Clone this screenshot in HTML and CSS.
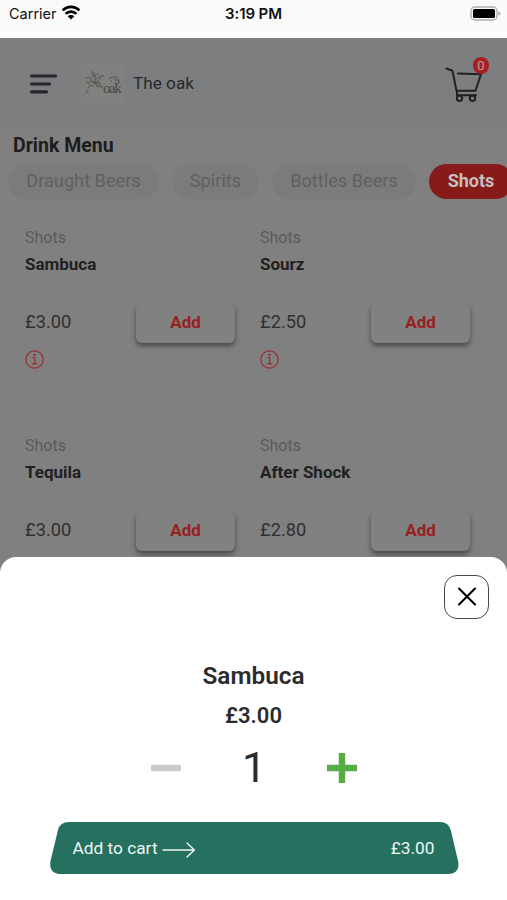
FILE: index.html
```html
<!DOCTYPE html>
<html lang="en">
<head>
<meta charset="utf-8">
<title>The oak - Drink Menu</title>
<link rel="stylesheet" href="styles.css">
</head>
<body>
<div class="screen">
  <div class="status">
    <div class="carrier"><span>Carrier</span>
      <svg width="20" height="15" viewBox="0 0 20 15" fill="none" stroke="#000" stroke-width="2.7"><path d="M1.6 5.4a12 12 0 0 1 16.8 0M4.6 8.9a7.7 7.7 0 0 1 10.8 0"/><path d="M10 14.4 6.7 11.3a4.7 4.7 0 0 1 6.6 0z" fill="#000" stroke="none"/></svg>
    </div>
    <div class="time">3:19 PM</div>
    <svg class="battery" width="31" height="15" viewBox="0 0 31 15"><rect x="1" y="1" width="26" height="13" rx="4" fill="#fafafa" stroke="#b1b1b1" stroke-width="1.4"/><rect x="3" y="3" width="22" height="9" rx="1.5"/><path d="M28.3 5.2q2.2.8 2.2 2.3t-2.2 2.3z" fill="#b1b1b1"/></svg>
  </div>
  <header class="header">
    <svg class="menu-icon" width="28" height="22" viewBox="0 0 28 22" stroke="#25252f" stroke-width="3.2" stroke-linecap="round"><path d="M2.5 3h24M2.5 11h18M2.5 18.8h15"/></svg>
    <div class="logo">
      <svg width="40" height="30" viewBox="0 0 40 30" fill="none" stroke="#56524f" stroke-width=".9"><path d="M2 11q4-4 6 1t6 2M4 15q5-4 9 1t7 2M9 4q4 2 3 7t5 5M8 9l8-3M11 12l9-5M5 21q0 5-3 3M5 20q3-5 6-1M10 7 9 3M14 14l7-7M3 13l4 4M7 11l8 8M12 14q5-2 6 5"/><path d="M29 14q-4-3-2-4t5-1 4 4-4 2M31 12q4-1 5 3"/></svg>
      <span>oak</span>
    </div>
    <span class="venue">The oak</span>
    <div class="cart">
      <svg width="40" height="39" viewBox="0 0 40 39" fill="none" stroke="#202123" stroke-width="2" stroke-linecap="round" stroke-linejoin="round"><path d="m1.5 3.5 6 2.2 4 20h19l5.5-16.5L13 8.5M12 25.7v4.5h19"/><circle cx="14.5" cy="33.3" r="2.7"/><circle cx="27.5" cy="33.3" r="2.7"/></svg>
      <span class="badge">0</span>
    </div>
  </header>
  <main class="content">
    <h1>Drink Menu</h1>
    <nav class="tabs">
      <span class="tab draught">Draught Beers</span><span class="tab spirits">Spirits</span><span class="tab bottles">Bottles Beers</span><span class="tab active">Shots</span>
    </nav>
    <section class="grid">
      <article class="item"><div class="category">Shots</div><h2>Sambuca</h2><div class="buy"><span class="cost">£3.00</span><span class="add">Add</span></div><svg class="info" width="20" height="20" viewBox="0 0 20 20" fill="none" stroke="#9a2a2e" stroke-width="1.2"><circle cx="9.5" cy="9.5" r="8.7"/><path d="M7.3 7.5h2.5v6.2M7.1 13.8h5"/><circle cx="9.5" cy="4.9" r=".6" fill="#9a2a2e"/></svg></article>
      <article class="item"><div class="category">Shots</div><h2>Sourz</h2><div class="buy"><span class="cost">£2.50</span><span class="add">Add</span></div><svg class="info" width="20" height="20" viewBox="0 0 20 20" fill="none" stroke="#9a2a2e" stroke-width="1.2"><circle cx="9.5" cy="9.5" r="8.7"/><path d="M7.3 7.5h2.5v6.2M7.1 13.8h5"/><circle cx="9.5" cy="4.9" r=".6" fill="#9a2a2e"/></svg></article>
      <article class="item"><div class="category">Shots</div><h2>Tequila</h2><div class="buy"><span class="cost">£3.00</span><span class="add">Add</span></div></article>
      <article class="item"><div class="category">Shots</div><h2>After Shock</h2><div class="buy"><span class="cost">£2.80</span><span class="add">Add</span></div></article>
    </section>
  </main>
  <section class="sheet">
    <div class="close"><svg width="20" height="20" viewBox="0 0 20 20" stroke="#000" stroke-width="2.1" stroke-linecap="round"><path d="m2 1.5 16 16M18 1.5l-16 16"/></svg></div>
    <h3>Sambuca</h3>
    <div class="price">£3.00</div>
    <div class="quantity">
      <svg width="30" height="30" viewBox="0 0 30 30"><path d="M0 11.8h30v6.4H0z" fill="#cbcbcd"/></svg>
      <span>1</span>
      <svg width="30" height="30" viewBox="0 0 30 30"><path d="M11.8 0h6.4v11.8H30v6.4H18.2V30h-6.4V18.2H0v-6.4h11.8z" fill="#56ad43"/></svg>
    </div>
    <div class="checkout">
      <svg class="checkout-shape" width="409" height="52" viewBox="0 0 409 52"><path d="M19 0h371q9 0 11 9l7.3 31q1.5 12-11.3 12H12Q-1.5 52 .5 39L8 8q2-8 11-8z" fill="#25705f"/></svg>
      <span>Add to cart</span>
      <svg width="34" height="18" viewBox="0 0 34 18" fill="none" stroke="#eef7f4" stroke-width="1.5" stroke-linecap="round" stroke-linejoin="round"><path d="M1 9h31M25 2l7.3 7L25 16"/></svg>
      <span class="total">£3.00</span>
    </div>
  </section>
</div>
</body>
</html>
```

FILE: styles.css
```css
* { box-sizing: border-box; }
body { margin: 0; font-family: Roboto, sans-serif; background: #808080; color: #2b2b2d; }
h1, h2, h3 { margin: 0; }
svg { display: block; flex-shrink: 0; }
.screen { position: relative; width: 507px; height: 900px; overflow: hidden; background: #808080; }
.status { height: 38px; padding: 5px 6px 0 9px; background: #fafafa; display: grid; grid-template-columns: 1fr auto 1fr; align-items: start; font-family: Inter, sans-serif; font-size: 14.5px; line-height: 18px; color: #111; }
.carrier { display: flex; gap: 5px; }
.carrier span { width: 47px; }
.time { font-weight: 600; font-size: 15px; letter-spacing: -0.1px; margin-right: 3px; }
.battery { justify-self: end; margin-top: 1px; }
.header { height: 92px; padding: 0 17px 0 29px; background: #7c7e80; display: flex; align-items: center; }
.logo { position: relative; width: 44px; height: 40px; margin-left: 23px; padding: 4px 3px; background: #80807f; }
.logo span { position: absolute; left: 23px; top: 14px; font: 15px/20px "Liberation Serif", serif; letter-spacing: -1.5px; color: #484643; }
.venue { margin-left: 9px; padding-bottom: 2px; font-size: 17.2px; line-height: 24px; color: #29292b; }
.cart { position: relative; width: 45px; height: 39px; margin-left: auto; }
.badge { position: absolute; left: 28px; top: -8px; width: 16px; height: 17px; border-radius: 8px; background: #a8201f; color: #b9a0a0; font-size: 13px; line-height: 17px; text-align: center; }
h1 { height: 34px; padding: 4px 0 0 13px; font-size: 19.5px; line-height: 24px; font-weight: 700; color: #1d1d1d; }
.tabs { display: flex; gap: 13px; padding-left: 8px; height: 35px; }
.tab { flex: none; border-radius: 18px; background: #7b7b7b; color: #606060; text-align: center; font-size: 18.2px; line-height: 34px; }
.draught { width: 151px; }
.spirits { width: 87px; }
.bottles { width: 144px; }
.active { width: 84px; background: #861b1a; color: #c7bfbf; font-weight: 700; font-size: 18px; }
.grid { display: grid; grid-template-columns: 235px 235px; grid-auto-rows: 207.5px; padding: 29px 0 0 25px; }
.category { font-size: 16px; line-height: 20px; color: #5b5b5b; }
h2 { margin-top: 5px; font-size: 17px; line-height: 22px; font-weight: 700; color: #202020; }
.buy { display: flex; align-items: center; justify-content: space-between; width: 210px; height: 40px; margin-top: 28px; font-size: 18.3px; color: #303032; }
.cost { padding-bottom: 3px; }
.add { width: 99px; height: 40px; border-radius: 6px; background: #818181; box-shadow: 0 3px 5px rgba(0,0,0,.45); color: #98201f; font-size: 17px; line-height: 39px; font-weight: 700; text-align: center; }
.info { margin-top: 7px; }
.sheet { position: absolute; left: 0; right: 0; bottom: 0; height: 343px; padding-top: 18px; background: #fff; border-radius: 16px 16px 0 0; display: flex; flex-direction: column; align-items: center; }
.close { width: 45px; height: 44px; margin-right: 18px; align-self: flex-end; border: 1.5px solid #49494b; border-radius: 13px; display: grid; place-items: center; }
h3 { margin-top: 41px; font-size: 24.3px; line-height: 32px; font-weight: 600; }
.price { margin-top: 10px; font-size: 22px; line-height: 28px; font-weight: 600; }
.quantity { width: 206px; height: 50px; margin: 13px 0 0 1px; display: flex; align-items: center; justify-content: space-between; }
.quantity span { font-size: 43px; line-height: 48px; padding-bottom: 2px; }
.checkout { position: relative; width: 409px; height: 52px; margin: 29px 0 0 1px; padding: 0 24px 1px 23px; display: flex; align-items: center; color: #eef7f4; font-size: 17.3px; }
.checkout > * { position: relative; }
.checkout .checkout-shape { position: absolute; left: 0; top: 0; }
.checkout > svg:not(.checkout-shape) { margin: 5px 0 0 4px; }
.total { margin-left: auto; }
```
